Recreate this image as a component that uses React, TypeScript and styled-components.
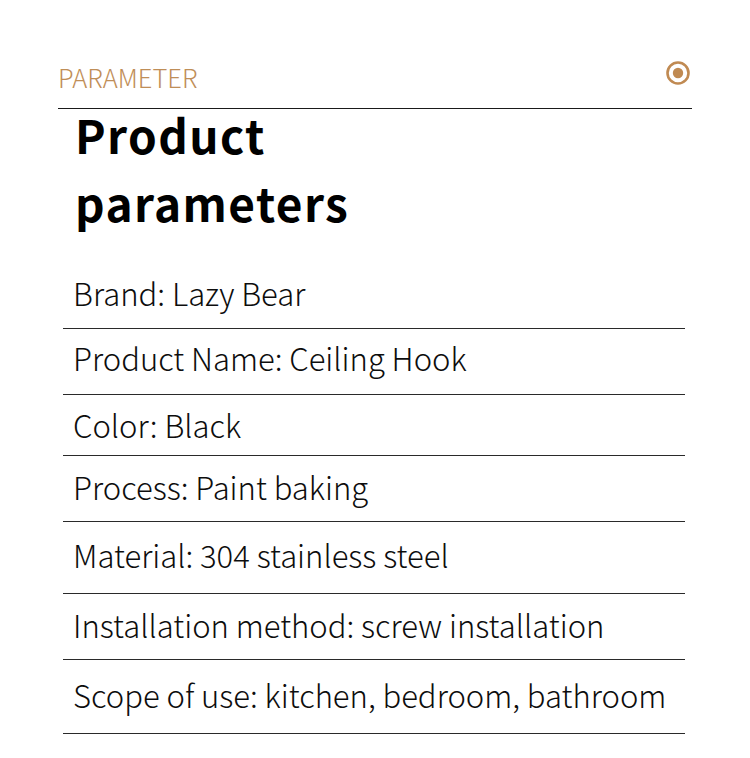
import React from "react";
import styled, { createGlobalStyle } from "styled-components";

const Global = createGlobalStyle`
  html, body { margin: 0; padding: 0; background: #ffffff; }
  body { font-family: "Noto Sans CJK SC", "Noto Sans", sans-serif; }
`;

const Page = styled.div`
  width: 750px;
  height: 758px;
  background: #fff;
  display: flex;
  flex-direction: column;
  padding-top: 56px;
  box-sizing: border-box;
`;

const Header = styled.div`
  margin: 0 58px;
  height: 52px;
  border-bottom: 1px solid #1a1a1a;
  display: flex;
  justify-content: space-between;
  align-items: flex-start;
`;

const Label = styled.span`
  font-size: 25.5px;
  font-weight: 300;
  line-height: 42px;
  color: #bf8e58;
`;

const Icon = styled.svg`
  width: 26px;
  height: 26px;
  margin-top: 4px;
  margin-right: 1px;
`;

const Title = styled.h1`
  margin: -9px 0 0 0;
  padding: 0 0 0 75px;
  font-size: 46px;
  font-weight: 700;
  letter-spacing: 1.4px;
  line-height: 68px;
  color: #000;
`;

const List = styled.div`
  margin: 27px 65px 0 63px;
  display: flex;
  flex-direction: column;
`;

const Row = styled.div<{ $h: number; $pb: number }>`
  height: ${(p) => p.$h}px;
  border-bottom: 1px solid #2a2a2a;
  box-sizing: border-box;
  display: flex;
  align-items: flex-end;
  padding: 0 0 ${(p) => p.$pb}px 10px;
  font-size: 31px;
  font-weight: 300;
  line-height: 30px;
  color: #0d0d0d;
`;

const rows = [
  { t: "Brand: Lazy Bear", h: 66, pb: 20 },
  { t: "Product Name: Ceiling Hook", h: 66, pb: 21 },
  { t: "Color: Black", h: 61, pb: 15 },
  { t: "Process: Paint baking", h: 66, pb: 19 },
  { t: "Material: 304 stainless steel", h: 72, pb: 23 },
  { t: "Installation method: screw installation", h: 66, pb: 19 },
  { t: "Scope of use: kitchen, bedroom, bathroom", h: 74, pb: 23 },
];

export default function App() {
  return (
    <>
      <Global />
      <Page>
        <Header>
          <Label>PARAMETER</Label>
          <Icon viewBox="0 0 26 26">
            <circle cx="13" cy="13" r="10.5" fill="none" stroke="#c08a52" strokeWidth="2.6" />
            <circle cx="13" cy="13" r="5.2" fill="#c08a52" />
          </Icon>
        </Header>
        <Title>
          Product
          <br />
          parameters
        </Title>
        <List>
          {rows.map((r) => (
            <Row key={r.t} $h={r.h} $pb={r.pb}>
              {r.t}
            </Row>
          ))}
        </List>
      </Page>
    </>
  );
}
